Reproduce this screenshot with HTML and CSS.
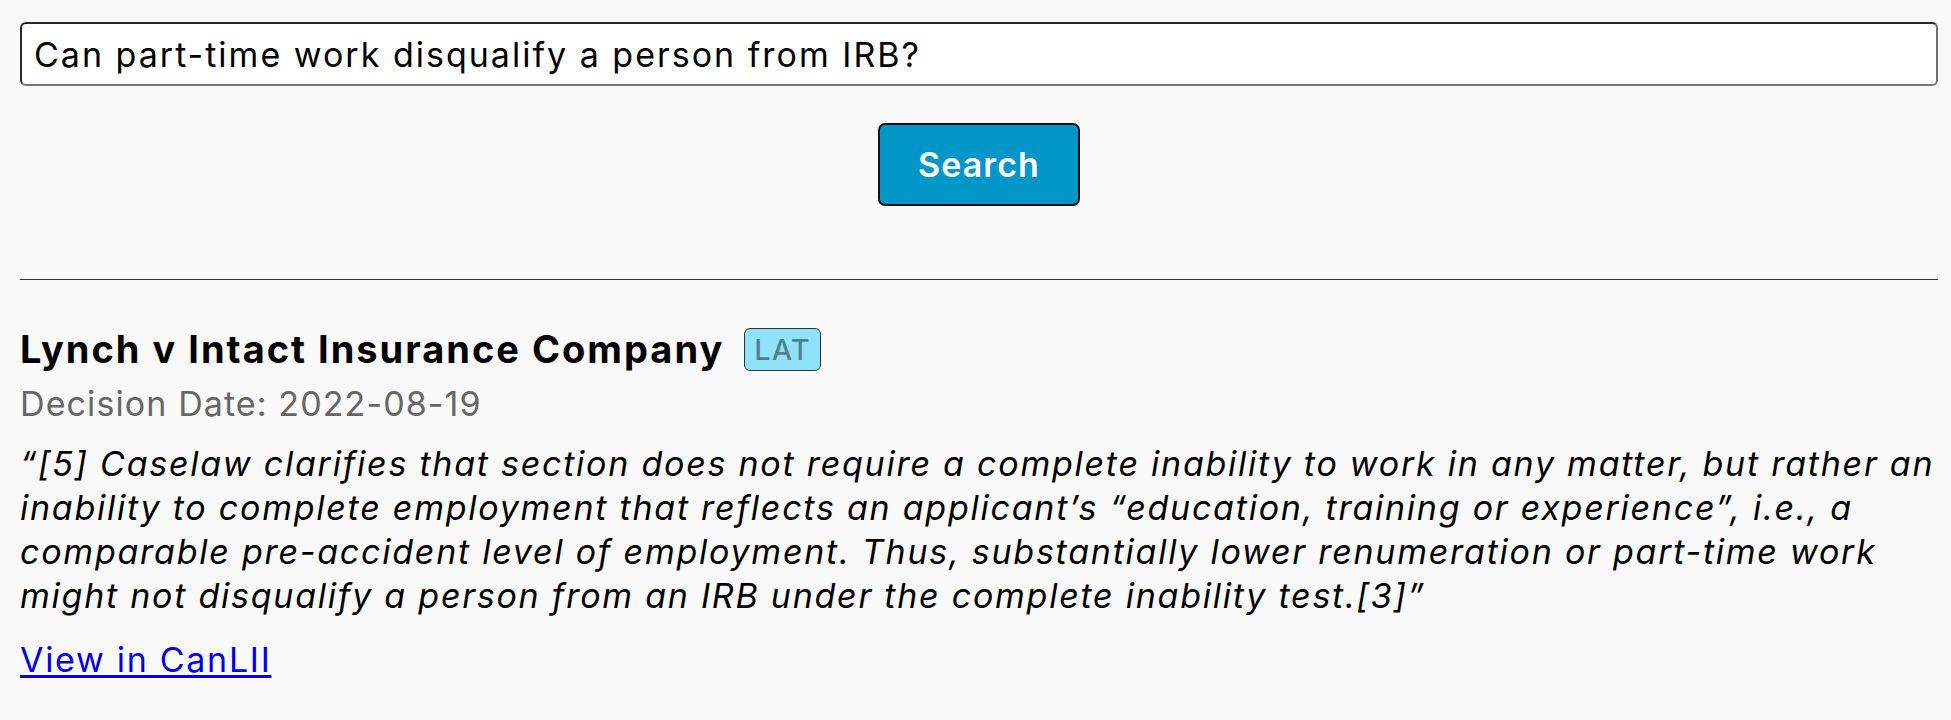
FILE: index.html
```html
<!DOCTYPE html>
<html lang="en">
<head>
<meta charset="utf-8">
<title>Case search</title>
<link rel="stylesheet" href="styles.css">
</head>
<body>
<main class="page">
  <form class="search-form">
    <input class="search-input" type="text" value="Can part-time work disqualify a person from IRB?">
    <button class="search-button" type="button">Search</button>
  </form>
  <hr class="divider">
  <section class="result">
    <div class="result-head">
      <h2 class="result-title">Lynch v Intact Insurance Company</h2>
      <span class="badge">LAT</span>
    </div>
    <div class="result-date">Decision Date: 2022-08-19</div>
    <p class="result-quote">“[5] Caselaw clarifies that section does not require a complete inability to work in any matter, but rather an<br>inability to complete employment that reflects an applicant’s “education, training or experience”, i.e., a<br>comparable pre-accident level of employment. Thus, substantially lower renumeration or part-time work<br>might not disqualify a person from an IRB under the complete inability test.[3]”</p>
    <a class="result-link" href="#">View in CanLII</a>
  </section>
</main>
</body>
</html>
```

FILE: styles.css
```css
html, body {
  margin: 0;
  padding: 0;
  background: #f9f9f9;
}

body {
  font-family: "Inter", "Open Sans", sans-serif;
  color: #000;
}

.page {
  padding: 22px 13px 0 20px;
}

.search-form {
  display: flex;
  flex-direction: column;
  align-items: center;
}

.search-input {
  box-sizing: border-box;
  width: 100%;
  height: 64px;
  margin: 0;
  padding: 0 12px;
  font-family: inherit;
  font-size: 34px;
  letter-spacing: 2px;
  color: #000;
  background: #fff;
  border: 2px solid;
  border-color: #262626 #6f6f6f #777 #262626;
  border-radius: 6px;
  outline: none;
}

.search-button {
  box-sizing: border-box;
  width: 202px;
  height: 83px;
  margin-top: 37px;
  padding: 0;
  font-family: inherit;
  font-size: 34px;
  font-weight: 600;
  letter-spacing: 1.1px;
  color: #fff;
  background: #0096c7;
  border: 2px solid #111;
  border-radius: 7px;
}

.divider {
  margin: 73px 0 0 0;
  height: 0;
  border: 0;
  border-top: 1px solid #333;
}

.result-head {
  display: flex;
  align-items: center;
  gap: 20px;
  margin-top: 45px;
}

.result-title {
  margin: 0;
  font-size: 38px;
  line-height: 48px;
  font-weight: 700;
  letter-spacing: 2px;
}

.badge {
  box-sizing: border-box;
  height: 43px;
  padding: 0 9px;
  display: flex;
  align-items: center;
  font-size: 29px;
  font-weight: 500;
  letter-spacing: 1px;
  color: rgba(0, 0, 0, 0.45);
  background: #90e2f8;
  border: 1px solid #333;
  border-radius: 6px;
}

.result-date {
  margin-top: 9px;
  font-size: 34px;
  line-height: 44px;
  letter-spacing: 1.1px;
  color: #666;
}

.result-quote {
  margin: 16px 0 0 0;
  font-size: 34px;
  line-height: 44px;
  font-style: italic;
  letter-spacing: 1.75px;
  white-space: nowrap;
}

.result-link {
  display: inline-block;
  margin-top: 20px;
  font-size: 34px;
  line-height: 44px;
  letter-spacing: 1.7px;
  color: #0000ee;
  text-decoration: underline;
  text-underline-offset: 3px;
}
```
